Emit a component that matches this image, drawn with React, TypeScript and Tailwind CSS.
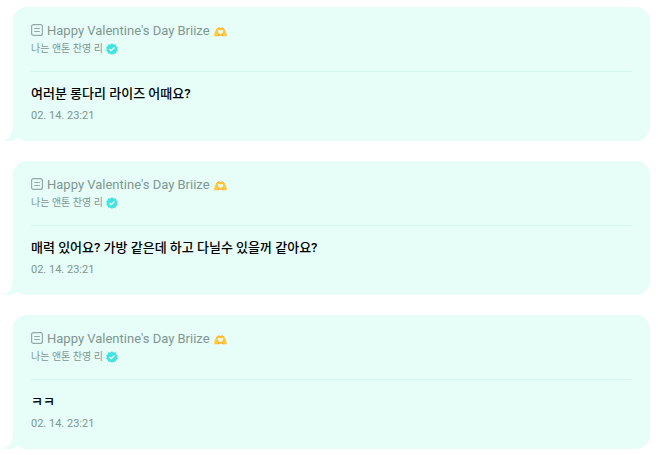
const messages = [
    { id: 1, text: '여러분 롱다리 라이즈 어때요?', time: '02. 14. 23:21' },
    { id: 2, text: '매력 있어요? 가방 같은데 하고 다닐수 있을꺼 같아요?', time: '02. 14. 23:21' },
    { id: 3, text: 'ㅋㅋ', time: '02. 14. 23:21' },
]

function PostIcon() {
    return (
        <svg className="w-3 h-3.5 shrink-0" viewBox="0 0 12 14" fill="none" stroke="#93aaa5" strokeWidth="1.2" aria-hidden="true">
            <rect x="0.6" y="0.6" width="10.8" height="10.8" rx="2" />
            <path d="M3.2 4.5h5.6M3.2 7.5h5.6" />
        </svg>
    )
}

function HeartHands() {
    return (
        <svg className="w-[13px] h-3 shrink-0" viewBox="0 -1 13 12" role="img" aria-label="heart hands">
            <path fill="#ffc83d" d="M0.2 10.3C0.1 8 0.9 5.5 2.3 3.3C3.3 1.6 5 1.3 6.5 2C8 1.3 9.7 1.6 10.7 3.3C12.1 5.5 12.9 8 12.8 10.3H9.3L8.6 9L6.5 9.3L4.4 9L3.7 10.3Z" />
            <path fill="#f59f20" d="M3.7 10.3L4.4 8.6L6.5 9L8.6 8.6L9.3 10.3H8.3L8 9.5H5L4.7 10.3Z" />
            <path fill="none" stroke="#f8ab24" strokeWidth="0.8" d="M2.5 3.4C3.5 1.9 5.2 1.7 6.5 2.5C7.8 1.7 9.5 1.9 10.5 3.4" />
            <path fill="#e8fdf8" d="M6.5 8.2C4.9 7.3 3.9 6.3 3.9 5.2C3.9 3.9 5.6 3.5 6.5 4.6C7.4 3.5 9.1 3.9 9.1 5.2C9.1 6.3 8.1 7.3 6.5 8.2Z" />
        </svg>
    )
}

function VerifiedBadge() {
    return (
        <svg className="w-3 h-3 shrink-0" viewBox="0 0 24 24" role="img" aria-label="verified">
            <path fill="#42e2df" d="M12 .5l3.2 2.3 4-.3 1.2 3.8 3.2 2.2L22.4 12l1.2 3.7-3.2 2.2-1.2 3.8-4-.3L12 23.5l-3.2-2.1-4 .3-1.2-3.800L.4 15.700 1.600 12 .4 8.500l3.200-2.200 1.200-3.800 4 .3z" />
            <path fill="none" stroke="#fff" strokeWidth="2.2" d="M7 12l3.5 3.5L17 9" />
        </svg>
    )
}

function MessageCard({ text, time }: { text: string; time: string }) {
    return (
        <article className="relative bg-[#e6fdf8] rounded-[14px] px-[18px] pt-4 pb-[17px]">
            <svg className="absolute -left-[9px] bottom-0 w-6 h-5" viewBox="0 0 24 20" aria-hidden="true">
                <path fill="#e6fdf8" d="M9 0C9 11 7.5 17.5 0 18.900V20H7.500C9.500 19.500 11.500 18.300 12.800 17L24 12V0Z" />
            </svg>
            <header className="border-b border-[#d4f5ee] pb-3.5">
                <div className="flex items-center h-4 text-[13px] leading-4 text-[#7f9692]">
                    <PostIcon />
                    <h2 className="mx-1">Happy Valentine's Day Briize</h2>
                    <HeartHands />
                </div>
                <div className="flex items-center gap-[3px] mt-0.5 text-[10px] leading-4 text-[#7f9692]">
                    <span>나는 앤톤 찬영 리</span>
                    <VerifiedBadge />
                </div>
            </header>
            <p className="mt-3 text-[13px] leading-5 font-medium text-black">{text}</p>
            <time className="block mt-1 text-[11px] leading-4 text-[#7f9692]">{time}</time>
        </article>
    )
}

export default function App() {
    return (
        <main lang="ko" className="flex flex-col gap-5 pl-[13px] pr-3.5 pt-[7px] pb-1.5 bg-white font-[Roboto,'Noto_Sans_CJK_KR',sans-serif]">
            {messages.map(m => <MessageCard key={m.id} text={m.text} time={m.time} />)}
        </main>
    )
}
